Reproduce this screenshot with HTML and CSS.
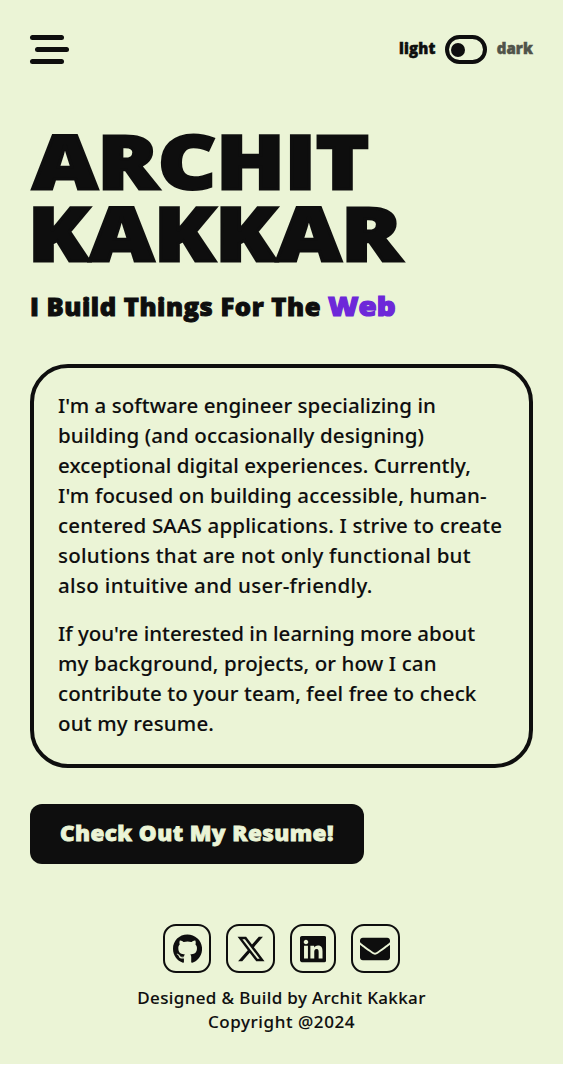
FILE: index.html
```html
<!DOCTYPE html>
<html lang="en">
<head>
<meta charset="utf-8">
<title>Archit Kakkar</title>
<link rel="stylesheet" href="styles.css">
</head>
<body>
<div class="page">
  <header class="topbar">
    <button class="menu" aria-label="Menu"><span class="bar"></span><span class="bar bar-shift"></span><span class="bar"></span></button>
    <div class="theme">
      <span class="theme-name">light</span>
      <span class="toggle"><span class="knob"></span></span>
      <span class="theme-name theme-off">dark</span>
    </div>
  </header>
  <main>
    <h1 class="name"><span class="name-line first">ARCHIT</span><span class="name-line last">KAKKAR</span></h1>
    <h2 class="tagline"><span class="lead">I Build Things For The</span><span class="web">Web</span></h2>
    <section class="about">
      <p>
        <span class="line s1">I'm a software engineer specializing in</span>
        <span class="line s2">building (and occasionally designing)</span>
        <span class="line s1">exceptional digital experiences. Currently,</span>
        <span class="line s3">I'm focused on building accessible, human-</span>
        <span class="line s3">centered SAAS applications. I strive to create</span>
        <span class="line s4">solutions that are not only functional but</span>
        <span class="line s5">also intuitive and user-friendly.</span>
      </p>
      <p>
        <span class="line s0">If you're interested in learning more about</span>
        <span class="line s2">my background, projects, or how I can</span>
        <span class="line s2">contribute to your team, feel free to check</span>
        <span class="line s3">out my resume.</span>
      </p>
    </section>
    <a class="resume"><span class="resume-label">Check Out My Resume!</span></a>
  </main>
  <footer class="footer">
    <div class="social">
      <a class="social-link" aria-label="GitHub"><svg class="icon" viewBox="0 0 496 512"><path d="M165.900 397.400c0 2-2.300 3.600-5.200 3.600-3.300.3-5.600-1.300-5.600-3.600 0-2 2.300-3.600 5.200-3.600 3-.3 5.600 1.300 5.600 3.600zm-31.100-4.500c-.7 2 1.300 4.300 4.300 4.900 2.600 1 5.600 0 6.200-2s-1.300-4.300-4.300-5.200c-2.600-.7-5.500.3-6.200 2.300zm44.200-1.700c-2.900.7-4.900 2.600-4.600 4.900.3 2 2.900 3.300 5.900 2.600 2.900-.7 4.900-2.600 4.600-4.600-.3-1.900-3-3.200-5.900-2.900zM244.800 8C106.100 8 0 113.300 0 252c0 110.900 69.800 205.800 169.500 239.200 12.800 2.300 17.300-5.600 17.300-12.100 0-6.200-.3-40.400-.3-61.400 0 0-70 15-84.700-29.800 0 0-11.400-29.100-27.800-36.600 0 0-22.900-15.700 1.600-15.400 0 0 24.900 2 38.600 25.800 21.900 38.600 58.600 27.500 72.900 20.900 2.300-16 8.800-27.100 16-33.700-55.900-6.200-112.300-14.300-112.300-110.500 0-27.500 7.600-41.300 23.600-58.900-2.600-6.500-11.100-33.300 2.600-67.900 20.900-6.500 69 27 69 27 20-5.600 41.500-8.500 62.800-8.500s42.800 2.900 62.800 8.500c0 0 48.100-33.600 69-27 13.700 34.700 5.200 61.400 2.600 67.900 16 17.700 25.800 31.500 25.800 58.900 0 96.500-58.900 104.200-114.800 110.500 9.200 7.900 17 22.900 17 46.400 0 33.700-.3 75.400-.3 83.600 0 6.500 4.600 14.400 17.300 12.100C428.200 457.800 496 362.900 496 252 496 113.300 383.500 8 244.800 8zM97.200 352.900c-1.300 1-1 3.300.7 5.200 1.600 1.600 3.900 2.300 5.200 1 1.300-1 1-3.300-.7-5.200-1.600-1.600-3.900-2.300-5.200-1zm-10.800-8.100c-.7 1.300.3 2.900 2.300 3.900 1.600 1 3.600.7 4.300-.7.7-1.300-.3-2.900-2.300-3.900-2-.6-3.600-.3-4.300.7zm32.400 35.600c-1.600 1.300-1 4.300 1.300 6.200 2.300 2.300 5.200 2.600 6.500 1 1.300-1.300.7-4.300-1.300-6.200-2.200-2.300-5.200-2.600-6.500-1zm-11.400-14.700c-1.600 1-1.600 3.600 0 5.900 1.600 2.300 4.300 3.300 5.600 2.300 1.600-1.300 1.600-3.900 0-6.200-1.400-2.300-4-3.300-5.600-2z"/></svg></a>
      <a class="social-link" aria-label="X"><svg class="icon" viewBox="0 0 512 512"><path d="M389.200 48h70.600L305.600 224.200 487 464H345L233.700 318.600 106.500 464H35.800L200.700 275.500 26.800 48H172.400L272.900 180.900 389.200 48zM364.400 421.800h39.100L151.100 88h-42L364.400 421.800z"/></svg></a>
      <a class="social-link" aria-label="LinkedIn"><svg class="icon" viewBox="0 0 448 512"><path d="M416 32H31.900C14.300 32 0 46.500 0 64.300v383.400C0 465.500 14.300 480 31.900 480H416c17.600 0 32-14.500 32-32.300V64.300c0-17.800-14.400-32.300-32-32.300zM135.400 416H69V202.200h66.500V416zm-33.200-243c-21.300 0-38.500-17.300-38.500-38.500S80.900 96 102.200 96c21.200 0 38.500 17.300 38.500 38.500 0 21.300-17.200 38.500-38.500 38.500zm282.100 243h-66.400V312c0-24.800-.5-56.700-34.500-56.700-34.600 0-39.900 27-39.900 54.900V416h-66.400V202.200h63.700v29.200h.9c8.900-16.800 30.600-34.500 62.900-34.500 67.200 0 79.700 44.300 79.700 101.900V416z"/></svg></a>
      <a class="social-link" aria-label="Email"><svg class="icon" viewBox="0 0 512 512"><path d="M502.300 190.800c3.900-3.100 9.700-.2 9.700 4.700V400c0 26.500-21.500 48-48 48H48c-26.500 0-48-21.500-48-48V195.600c0-5 5.700-7.800 9.700-4.700 22.400 17.400 52.100 39.500 154.100 113.600 21.100 15.400 56.700 47.800 92.200 47.600 35.700.3 72-32.800 92.300-47.600 102-74.100 131.600-96.300 154-113.700zM256 320c23.200.4 56.600-29.200 73.400-41.400 132.700-96.300 142.800-104.700 173.400-128.700 5.800-4.500 9.200-11.500 9.200-18.900v-19c0-26.500-21.500-48-48-48H48c-26.500 0-48 21.500-48 48v19c0 7.400 3.400 14.300 9.200 18.900 30.600 23.900 40.700 32.400 173.400 128.700 16.800 12.200 50.200 41.800 73.400 41.400z"/></svg></a>
    </div>
    <div class="credit">Designed &amp; Build by Archit Kakkar</div>
    <div class="credit copyright">Copyright @2024</div>
  </footer>
</div>
</body>
</html>
```
FILE: styles.css
```css
* { box-sizing: border-box; }
html { background: #fff; }
body { margin: 0; color: #0e0e0e; font-family: "Noto Sans", sans-serif; font-weight: 500; }
.page { height: 1064px; padding: 35px 30px 0; background: #ebf4d6; }
.topbar { display: flex; justify-content: space-between; align-items: center; height: 29px; }
.menu { display: flex; flex-direction: column; justify-content: space-between; width: 39px; height: 29px; padding: 0; border: 0; background: none; }
.bar { width: 34px; height: 5px; border-radius: 3px; background: #0e0e0e; }
.bar-shift { margin-left: 5px; }
.theme { display: flex; align-items: center; gap: 9px; }
.theme-name { font: 800 15px/24px "Open Sans", sans-serif; letter-spacing: .2px; padding-bottom: 3px; -webkit-text-stroke: .5px currentColor; }
.theme-off { color: #50534a; letter-spacing: .1px; }
.toggle { display: flex; align-items: center; width: 42px; height: 29px; margin-right: 1px; padding-left: 2.5px; border: 4.5px solid #0e0e0e; border-radius: 15px; }
.knob { width: 14px; height: 14px; border-radius: 50%; background: #0e0e0e; }
.name { margin: 61px 0 0; font: 800 74px/72px "Open Sans", sans-serif; -webkit-text-stroke: 2.8px #0e0e0e; }
.name-line { display: block; width: max-content; transform-origin: left; }
.first { padding-left: 2px; transform: scaleX(1.21); }
.last { margin-left: -2px; transform: scaleX(1.205); }
.tagline { display: flex; align-items: baseline; margin: 19px 0 0; height: 36px; font: 800 24px/36px "Open Sans", sans-serif; white-space: nowrap; }
.lead { width: 298px; }
.lead, .web, .resume-label { transform-origin: left; }
.lead { letter-spacing: .5px; transform: scaleX(1.065); -webkit-text-stroke: .9px #0e0e0e; }
.web { color: #6d28d9; font-size: 26px; transform: scaleX(1.13); -webkit-text-stroke: 1.2px #6d28d9; }
.about { height: 404px; margin-top: 40px; padding: 22px 24px 0; border: 4px solid #0e0e0e; border-radius: 38px; font-size: 20.5px; line-height: 30px; }
.about, .credit { -webkit-text-stroke: .1px #0e0e0e; }
.about p { margin: 0 0 18px; }
.line { display: block; white-space: nowrap; }
.s0 { letter-spacing: 0; }
.s1 { letter-spacing: .07px; }
.s2 { letter-spacing: .11px; }
.s3 { letter-spacing: .17px; }
.s4 { letter-spacing: .28px; }
.s5 { letter-spacing: .34px; }
.resume { display: flex; align-items: center; width: 334px; height: 60px; margin-top: 36px; padding: 0 0 2px 30px; border-radius: 12px; background: #0e0e0e; color: #ebf4d6; font: 800 21px/30px "Open Sans", sans-serif; white-space: nowrap; }
.resume-label { letter-spacing: .4px; transform: scaleX(1.07); -webkit-text-stroke: .8px #ebf4d6; }
.footer { margin-top: 60px; text-align: center; }
.social { display: flex; justify-content: center; gap: 15px; margin-bottom: 13px; }
.social-link { display: flex; padding: 7.5px; border: 2px solid #0e0e0e; border-radius: 13px; }
.icon { display: block; height: 30px; fill: #0e0e0e; }
.credit { font-size: 17px; line-height: 24px; letter-spacing: .37px; }
.copyright { letter-spacing: .58px; }
```
